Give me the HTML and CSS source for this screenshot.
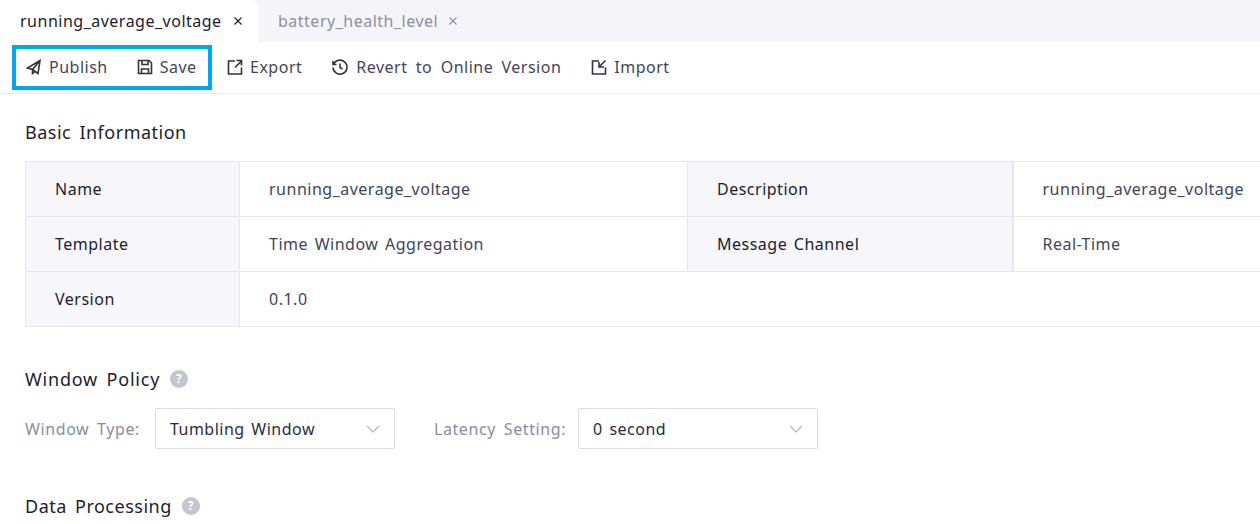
FILE: index.html
```html
<!DOCTYPE html>
<html lang="en">
<head>
    <meta charset="UTF-8">
    <meta name="viewport" content="width=device-width, initial-scale=1.0">
    <title>running_average_voltage</title>
    <link rel="stylesheet" href="styles.css">
</head>
<body>
    <div class="tabs">
        <div class="tab tab-active">
            <span>running_average_voltage</span>
            <svg class="tab-close" viewBox="0 0 10 10"><path d="M1.500 1.500l7 7M8.500 1.500l-7 7"/></svg>
        </div>
        <div class="tab">
            <span>battery_health_level</span>
            <svg class="tab-close" viewBox="0 0 10 10"><path d="M1.500 1.500l7 7M8.500 1.500l-7 7"/></svg>
        </div>
    </div>

    <div class="toolbar">
        <div class="highlight">
            <button class="tool">
                <svg class="icon" viewBox="0 0 16 16"><path d="M14 1.500L1.500 9l5 1.500 5.500 4zM14 1.500L6.500 10.500V14.500L9 12.500"/></svg>
                Publish
            </button>
            <button class="tool">
                <svg class="icon" viewBox="0 0 16 16"><path d="M1.500 1.500h10.500l2.500 2.500v10.500H1.500zM5 1.500v4h6v-4M4.500 14.500v-4.500h7v4.500"/></svg>
                Save
            </button>
        </div>
        <button class="tool">
            <svg class="icon" viewBox="0 0 16 16"><path d="M8 2H1.500v13H14.500V8.500M8 8.500L14 2.500M9.500 1.500h5v5"/></svg>
            Export
        </button>
        <button class="tool tool-wide">
            <svg class="icon" viewBox="0 0 16 16"><path d="M1.500 5.500A7 7 0 1 1 1 8.500M1 2v3.500h3.500M8 4.500v4l2.500 1.500"/></svg>
            Revert to Online Version
        </button>
        <button class="tool">
            <svg class="icon" viewBox="0 0 16 16"><path d="M8 2H1.500v13H14.500V8.500M14.500 1.500L8.500 7.500M8 3v5h5"/></svg>
            Import
        </button>
    </div>

    <div class="content">
        <h2 class="section-title">Basic Information</h2>
        <table class="info">
            <tr>
                <th class="col-a">Name</th>
                <td class="col-b">running_average_voltage</td>
                <th class="col-c">Description</th>
                <td>running_average_voltage</td>
            </tr>
            <tr>
                <th>Template</th>
                <td>Time Window Aggregation</td>
                <th class="col-c">Message Channel</th>
                <td>Real-Time</td>
            </tr>
            <tr>
                <th>Version</th>
                <td colspan="3">0.1.0</td>
            </tr>
        </table>

        <h2 class="section-title policy-title">
            Window Policy
            <span class="help">?</span>
        </h2>
        <div class="fields">
            <label class="field-label">Window Type:</label>
            <div class="select">
                <span>Tumbling Window</span>
                <svg class="chevron" viewBox="0 0 14 8"><path d="M1 1l6 6 6-6"/></svg>
            </div>
            <label class="field-label latency-label">Latency Setting:</label>
            <div class="select">
                <span>0 second</span>
                <svg class="chevron" viewBox="0 0 14 8"><path d="M1 1l6 6 6-6"/></svg>
            </div>
        </div>

        <h2 class="section-title processing-title">
            Data Processing
            <span class="help">?</span>
        </h2>
    </div>
</body>
</html>
```

FILE: styles.css
```css
html, body {
    height: 100%;
}
body {
    font-family: "Noto Sans", Arial, sans-serif;
    font-size: 16px;
    letter-spacing: 0.5px;
    word-spacing: 2px;
    color: #2b2b40;
    margin: 0;
    background-color: #fff;
    overflow: hidden;
}

.tabs {
    display: flex;
    height: 42px;
    background-color: #f4f4f9;
}
.tab {
    display: flex;
    align-items: center;
    gap: 10px;
    padding: 0 20px;
    color: #8f8fa3;
}
.tab-active {
    width: 258px;
    box-sizing: border-box;
    gap: 11px;
    padding-right: 0;
    background-color: #fff;
    color: #1d1d2e;
    border-top-right-radius: 6px;
}
.tab-close {
    flex-shrink: 0;
    width: 10px;
    height: 10px;
    fill: none;
    stroke: currentColor;
    stroke-width: 1.1;
}

.toolbar {
    display: flex;
    align-items: center;
    height: 51px;
    padding-left: 12px;
    border-bottom: 1px solid #ececf0;
}
.highlight {
    display: flex;
    align-items: center;
    gap: 29px;
    height: 45px;
    width: 200px;
    box-sizing: border-box;
    padding-left: 10px;
    border: 4px solid #00a8f0;
    margin-right: 15px;
}
.tool {
    display: flex;
    align-items: center;
    gap: 7px;
    padding: 0 0 2px;
    margin-right: 30px;
    font: inherit;
    letter-spacing: inherit;
    word-spacing: inherit;
    color: #44445a;
    background: none;
    border: none;
}
.highlight .tool {
    margin-right: 0;
}
.tool-wide {
    gap: 8px;
    word-spacing: 3.7px;
}
.icon {
    width: 16px;
    height: 16px;
    fill: none;
    stroke: #33333f;
    stroke-width: 1.6;
}

.content {
    padding: 0 0 0 25px;
}
.section-title {
    display: flex;
    align-items: center;
    gap: 10px;
    margin: 0;
    font-size: 18px;
    font-weight: 400;
    line-height: 26px;
    word-spacing: 3px;
    color: #1d1d2e;
}
.content > .section-title:first-child {
    margin-top: 25px;
}
.policy-title {
    margin-top: 39px;
    letter-spacing: 0.8px;
}
.processing-title {
    margin-top: 44px;
}
.help {
    width: 18px;
    height: 18px;
    border-radius: 50%;
    background-color: #c5c5d2;
    color: #fff;
    font-size: 12px;
    font-weight: 700;
    line-height: 18px;
    text-align: center;
}

.info {
    width: 1260px;
    margin-top: 16px;
    border-collapse: collapse;
    table-layout: fixed;
}
.info th, .info td {
    height: 55px;
    padding: 0 0 0 29px;
    border: 1px solid #e6e6ec;
    font-weight: 400;
    text-align: left;
    box-sizing: border-box;
}
.info th {
    background-color: #f6f6fb;
    color: #1d1d2e;
}
.info td {
    color: #44445a;
}
.col-a {
    width: 214px;
}
.col-b {
    width: 448px;
}
.info th.col-c {
    width: 325px;
    border-right-width: 2px;
}

.fields {
    display: flex;
    align-items: center;
    margin-top: 16px;
}
.field-label {
    color: #8c8c9c;
    letter-spacing: 0.6px;
    word-spacing: 3px;
    margin-right: 15px;
}
.latency-label {
    margin-left: 39px;
    margin-right: 12px;
}
.select {
    display: flex;
    align-items: center;
    justify-content: space-between;
    width: 240px;
    height: 41px;
    box-sizing: border-box;
    padding: 0 14px;
    border: 1px solid #dcdce5;
    border-radius: 2px;
    color: #2b2b40;
}
.chevron {
    width: 14px;
    height: 8px;
    fill: none;
    stroke: #b4b4c2;
    stroke-width: 1.2;
}
```
